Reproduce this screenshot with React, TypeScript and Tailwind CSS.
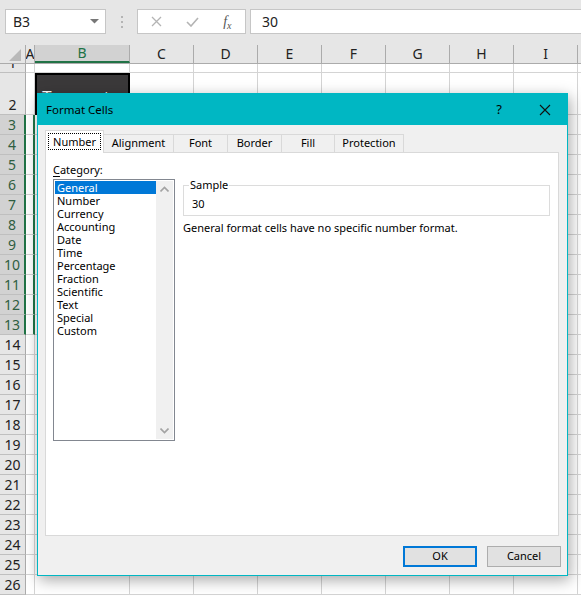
import React from 'react'

const UI = { fontFamily: '"Noto Sans", "Open Sans", sans-serif' }

const COLS = [
  { k: 'A', w: 9 },
  { k: 'B', w: 95 },
  { k: 'C', w: 64 },
  { k: 'D', w: 64 },
  { k: 'E', w: 64 },
  { k: 'F', w: 64 },
  { k: 'G', w: 64 },
  { k: 'H', w: 64 },
  { k: 'I', w: 64 },
  { k: 'J', w: 64 },
]

const ROWS = Array.from({ length: 26 }, (_, i) => i + 1)

const CATEGORIES = [
  'General',
  'Number',
  'Currency',
  'Accounting',
  'Date',
  'Time',
  'Percentage',
  'Fraction',
  'Scientific',
  'Text',
  'Special',
  'Custom',
]

const TABS = [
  { label: 'Number', w: 59 },
  { label: 'Alignment', w: 70 },
  { label: 'Font', w: 54 },
  { label: 'Border', w: 54 },
  { label: 'Fill', w: 53 },
  { label: 'Protection', w: 69 },
]

function rowHeight(r: number) {
  if (r === 1) return 'h-[9px]'
  if (r === 2) return 'h-[42px]'
  return 'h-[20px]'
}

function FormulaBar() {
  return (
    <div className="flex h-[45px] items-start bg-[#e6e6e6] pt-[9px]">
      <div className="ml-[5px] flex h-[25px] w-[101px] items-center justify-between border border-[#c6c6c6] bg-white pl-[7px] pr-[6px] text-[14px] text-[#222]">
        <span>B3</span>
        <svg width="9" height="5" viewBox="0 0 9 5">
          <polygon points="0,0 9,0 4.5,4.5" fill="#777" />
        </svg>
      </div>
      <div className="flex h-[25px] w-[31px] flex-col items-center justify-center gap-[3px]">
        <span className="h-[2px] w-[2px] bg-[#b4b4b4]" />
        <span className="h-[2px] w-[2px] bg-[#b4b4b4]" />
        <span className="h-[2px] w-[2px] bg-[#b4b4b4]" />
      </div>
      <div className="flex h-[25px] w-[109px] items-center border border-[#c6c6c6] bg-white">
        <div className="flex w-[37px] justify-center">
          <svg width="11" height="11" viewBox="0 0 11 11">
            <path d="M1 1 L10 10 M10 1 L1 10" stroke="#b4b4b4" strokeWidth="1.3" />
          </svg>
        </div>
        <div className="flex w-[36px] justify-center">
          <svg width="13" height="10" viewBox="0 0 13 10">
            <path d="M1 5 L5 9 L12 1" stroke="#b4b4b4" strokeWidth="1.6" fill="none" />
          </svg>
        </div>
        <div className="flex w-[36px] justify-center">
          <span
            className="text-[14px] italic text-[#555]"
            style={{ fontFamily: '"Liberation Serif", serif' }}
          >
            f<sub className="text-[10px]">x</sub>
          </span>
        </div>
      </div>
      <div className="ml-[4px] flex h-[25px] flex-1 items-center border-y border-l border-[#c6c6c6] bg-white pl-[11px] text-[14px] text-[#222]">
        30
      </div>
    </div>
  )
}

function ColumnHeaders() {
  return (
    <div className="flex h-[19px] border-b border-[#ababab] bg-[#e6e6e6] text-[14px] text-[#222]">
      <div className="flex w-[26px] shrink-0 items-end justify-end border-r border-[#ababab] pb-[2px] pr-[4px]">
        <svg width="12" height="12" viewBox="0 0 12 12">
          <polygon points="12,0 12,12 0,12" fill="#b9b9b9" />
        </svg>
      </div>
      {COLS.map((c) => (
        <div
          key={c.k}
          className={`flex shrink-0 items-center justify-center overflow-hidden border-r border-[#ababab] leading-none ${
            c.k === 'B' ? 'border-b-2 border-b-[#217346] bg-[#d2d2d2] text-[#217346]' : ''
          }`}
          style={{ width: c.w }}
        >
          {c.k}
        </div>
      ))}
    </div>
  )
}

function GridRow({ r }: { r: number }) {
  const selected = r >= 3 && r <= 13
  return (
    <div className={`flex ${rowHeight(r)}`}>
      <div
        className={`flex w-[26px] shrink-0 items-end justify-center overflow-hidden border-b border-[#bfbfbf] text-[14px] leading-[18px] ${
          selected
            ? 'border-r-2 border-r-[#217346] bg-[#d2d2d2] text-[#2f5e41]'
            : 'border-r border-r-[#ababab] bg-[#e6e6e6] text-[#222]'
        }`}
      >
        {r}
      </div>
      {COLS.map((c) => {
        if (c.k === 'B' && r === 2) {
          return (
            <div
              key={c.k}
              className="shrink-0 overflow-visible border-2 border-black bg-[#3b393a] pl-[5px] pt-[15px] text-[16px] leading-none whitespace-nowrap text-white"
              style={{ width: c.w, fontFamily: '"Liberation Sans", sans-serif' }}
            >
              Temperature
            </div>
          )
        }
        const greenEdge = c.k === 'A' && selected
        return (
          <div
            key={c.k}
            className={`shrink-0 border-b border-[#d4d4d4] ${
              greenEdge ? 'border-r-2 border-r-[#217346]' : 'border-r border-r-[#d4d4d4]'
            }`}
            style={{ width: c.w }}
          />
        )
      })}
    </div>
  )
}

function NumberPanel() {
  return (
    <div className="flex h-[384px] w-[514px] flex-col border border-[#d9d9d9] bg-white px-[7px] pt-[8px]">
      <div className="h-[18px] text-[11px] leading-[18px] text-black">
        <span className="underline underline-offset-2">C</span>ategory:
      </div>
      <div className="flex gap-[8px]">
        <div className="flex h-[262px] w-[122px] border border-[#828790] bg-white p-[1px]">
          <div className="flex flex-1 flex-col">
            {CATEGORIES.map((c, i) => (
              <div
                key={c}
                className={`h-[13px] pl-[2px] text-[11px] leading-[13px] ${
                  i === 0 ? 'bg-[#0078d7] text-white' : 'text-black'
                }`}
              >
                {c}
              </div>
            ))}
          </div>
          <div className="flex w-[17px] flex-col items-center justify-between bg-[#f0f0f0] py-[5px]">
            <svg width="9" height="6" viewBox="0 0 9 6">
              <path d="M0.5 5.5 L4.5 1.5 L8.5 5.5" stroke="#a3a3a3" strokeWidth="1.6" fill="none" />
            </svg>
            <svg width="9" height="6" viewBox="0 0 9 6">
              <path d="M0.5 0.5 L4.5 4.5 L8.5 0.5" stroke="#a3a3a3" strokeWidth="1.6" fill="none" />
            </svg>
          </div>
        </div>
        <div className="flex w-[367px] flex-col">
          <fieldset className="h-[37px] border border-[#dcdcdc] px-[5px]">
            <legend className="px-[1px] text-[11px] leading-[12px] text-black">Sample</legend>
            <div className="pl-[3px] pt-[6px] text-[11px] leading-[14px] text-black">30</div>
          </fieldset>
          <div className="pt-[4px] text-[11px] leading-[16px] text-black">
            General format cells have no specific number format.
          </div>
        </div>
      </div>
    </div>
  )
}

function FormatCellsDialog() {
  return (
    <div
      className="absolute left-[37px] top-[93px] flex h-[483px] w-[531px] flex-col border border-[#00b7c3] bg-[#f0f0f0] shadow-[2px_4px_14px_rgba(0,0,0,0.35)]"
      style={UI}
    >
      <div className="flex h-[31px] shrink-0 items-center bg-[#00b7c3] text-black">
        <span className="pl-[8px] text-[11.5px]">Format Cells</span>
        <span className="ml-auto w-[20px] text-center text-[13px]">?</span>
        <div className="flex w-[58px] justify-start pl-[30px]">
          <svg width="12" height="12" viewBox="0 0 12 12">
            <path d="M1 1 L11 11 M11 1 L1 11" stroke="#111" strokeWidth="1.1" />
          </svg>
        </div>
      </div>
      <div className="flex flex-col pl-[7px] pt-[5px]">
        <div className="relative z-10 -mb-[1px] flex h-[23px] items-end">
          {TABS.map((t, i) =>
            i === 0 ? (
              <div
                key={t.label}
                className="flex h-[23px] shrink-0 items-center justify-center border-x border-t border-[#d9d9d9] bg-white pb-[1px]"
                style={{ width: t.w }}
              >
                <span className="border border-dotted border-black px-[4px] text-[11px] leading-[15px] text-black">
                  {t.label}
                </span>
              </div>
            ) : (
              <div
                key={t.label}
                className="flex h-[19px] shrink-0 items-center justify-center border-r border-t border-b border-[#d9d9d9] bg-[#f0f0f0] text-[11px] text-black"
                style={{ width: t.w }}
              >
                {t.label}
              </div>
            )
          )}
        </div>
        <NumberPanel />
      </div>
      <div className="flex justify-end gap-[10px] pr-[6px] pt-[10px]">
        <button className="h-[21px] w-[74px] border-2 border-[#0078d7] bg-[#e1e1e1] text-[11px] text-black">
          OK
        </button>
        <button className="h-[21px] w-[74px] border border-[#adadad] bg-[#e1e1e1] text-[11px] text-black">
          Cancel
        </button>
      </div>
    </div>
  )
}

export default function App() {
  return (
    <div className="relative h-[596px] w-[581px] overflow-hidden bg-white" style={UI}>
      <FormulaBar />
      <ColumnHeaders />
      {ROWS.map((r) => (
        <GridRow key={r} r={r} />
      ))}
      <FormatCellsDialog />
    </div>
  )
}
